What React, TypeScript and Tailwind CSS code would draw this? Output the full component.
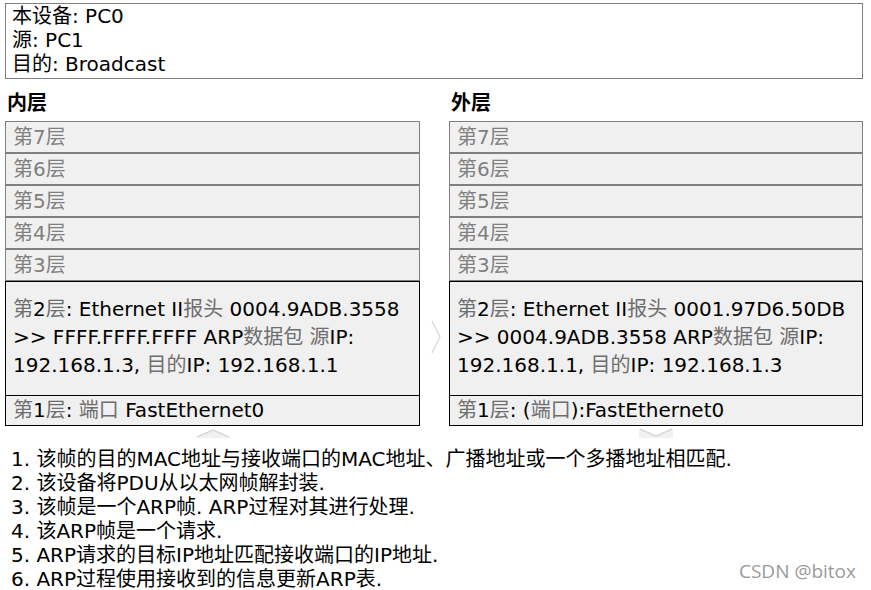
const font = { fontFamily: '"DejaVu Sans", "Noto Sans CJK SC", sans-serif' };

function Gray({ children }: { children: React.ReactNode }) {
  return <span className="text-[#6e6e6e]">{children}</span>;
}

function UpperLayers() {
  return (
    <div className="flex flex-col">
      {[7, 6, 5, 4, 3].map((n) => (
        <div
          key={n}
          className="h-[32px] border border-[#808080] bg-[#f0f0f0] px-[7px] leading-[30px] text-[#808080]"
        >
          第{n}层
        </div>
      ))}
    </div>
  );
}

function Chevron({ dir }: { dir: "up" | "down" | "right" }) {
  if (dir === "right")
    return (
      <svg width="10" height="34" viewBox="0 0 10 34">
        <path d="M1 1 L9 17 L1 33" fill="none" stroke="#d8d8d8" strokeWidth="1.2" />
      </svg>
    );
  return (
    <svg width="34" height="10" viewBox="0 0 34 10">
      {dir === "up" ? (
        <>
          <path d="M0 10 L17 2 L34 10 Z" fill="#f0f0f0" />
          <path d="M1 9 L17 2 L33 9" fill="none" stroke="#d0d0d0" strokeWidth="1.2" />
        </>
      ) : (
        <>
          <rect x="0" y="0" width="34" height="10" fill="#f0f0f0" />
          <path d="M0 0 L17 8 L34 0 Z" fill="#ffffff" />
          <path d="M1 1 L17 8 L33 1" fill="none" stroke="#d0d0d0" strokeWidth="1.2" />
        </>
      )}
    </svg>
  );
}

export default function App() {
  return (
    <div className="relative w-[871px] h-[590px] bg-white text-black text-[20px]" style={font}>
      <div className="pt-[3px] pl-[5px] pr-[8px]">
        <div className="border border-[#808080] px-[6px] pb-[2px] leading-[24px]">
          <div>本设备: PC0</div>
          <div>源: PC1</div>
          <div>目的: Broadcast</div>
        </div>
      </div>

      <div className="flex pl-[5px] pr-[8px] mt-[12px]">
        <div className="w-[415px]">
          <div className="font-bold h-[30px] leading-[24px] pl-[2px]">内层</div>
          <UpperLayers />
          <div className="h-[115px] border border-black bg-[#f0f0f0] px-[7px] pb-[3px] flex items-center leading-[28px]">
            <div>
              <Gray>第</Gray>2<Gray>层</Gray>: Ethernet II<Gray>报头</Gray> 0004.9ADB.3558
              <br />
              &gt;&gt; FFFF.FFFF.FFFF ARP<Gray>数据包 源</Gray>IP:
              <br />
              192.168.1.3, <Gray>目的</Gray>IP: 192.168.1.1
            </div>
          </div>
          <div className="-mt-px h-[31px] border border-black bg-[#f0f0f0] px-[7px] leading-[29px]">
            <Gray>第</Gray>1<Gray>层</Gray>: <Gray>端口</Gray> FastEthernet0
          </div>
          <div className="flex justify-center mt-[2px]">
            <Chevron dir="up" />
          </div>
        </div>

        <div className="w-[29px] flex justify-center items-start pt-[229px] pl-[2px]">
          <Chevron dir="right" />
        </div>

        <div className="flex-1">
          <div className="font-bold h-[30px] leading-[24px] pl-[2px]">外层</div>
          <UpperLayers />
          <div className="h-[115px] border border-black bg-[#f0f0f0] px-[7px] pb-[3px] flex items-center leading-[28px]">
            <div>
              <Gray>第</Gray>2<Gray>层</Gray>: Ethernet II<Gray>报头</Gray> 0001.97D6.50DB
              <br />
              &gt;&gt; 0004.9ADB.3558 ARP<Gray>数据包 源</Gray>IP:
              <br />
              192.168.1.1, <Gray>目的</Gray>IP: 192.168.1.3
            </div>
          </div>
          <div className="-mt-px h-[31px] border border-black bg-[#f0f0f0] px-[7px] leading-[29px]">
            <Gray>第</Gray>1<Gray>层</Gray>: (<Gray>端口</Gray>):FastEthernet0
          </div>
          <div className="flex justify-center mt-[2px]">
            <Chevron dir="down" />
          </div>
        </div>
      </div>

      <ol className="pl-[11px] mt-[9px] leading-[24px]">
        <li>1. 该帧的目的MAC地址与接收端口的MAC地址、广播地址或一个多播地址相匹配.</li>
        <li>2. 该设备将PDU从以太网帧解封装.</li>
        <li>3. 该帧是一个ARP帧. ARP过程对其进行处理.</li>
        <li>4. 该ARP帧是一个请求.</li>
        <li>5. ARP请求的目标IP地址匹配接收端口的IP地址.</li>
        <li>6. ARP过程使用接收到的信息更新ARP表.</li>
      </ol>

      <div
        className="absolute right-[15px] bottom-[5px] text-[19px] text-[#9a9a9a]"
        style={{ fontFamily: '"Open Sans", sans-serif' }}
      >
        CSDN @bitox
      </div>
    </div>
  );
}
